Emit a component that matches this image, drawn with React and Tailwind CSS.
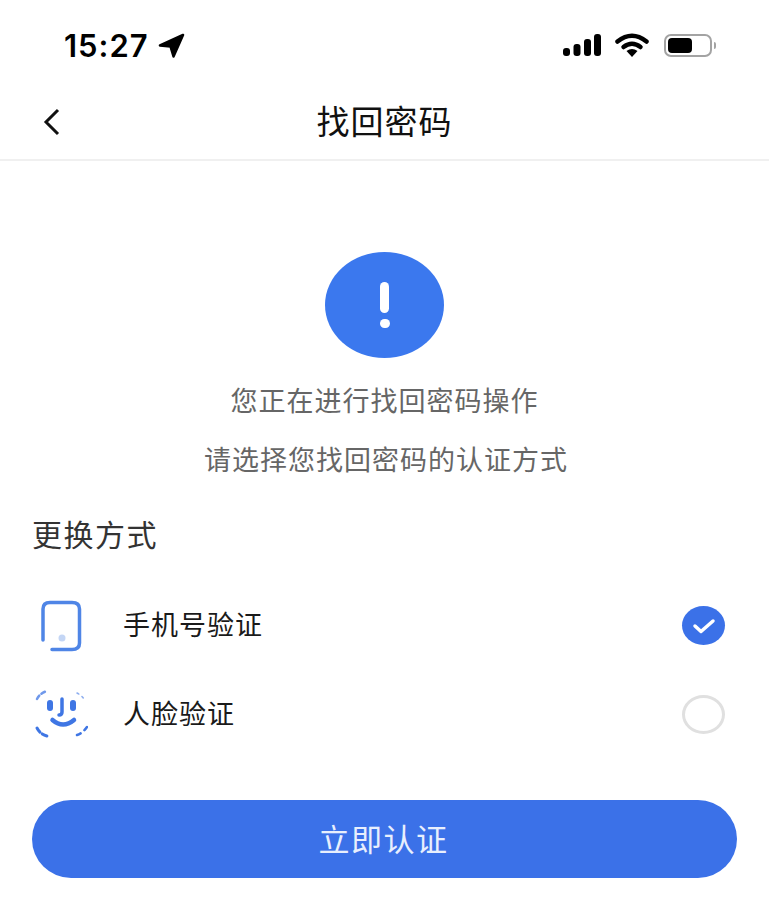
import React from 'react';

const cjk = { fontFamily: '"Noto Sans CJK SC", sans-serif' };

function StatusBar() {
  return (
    <div className="h-[86px] flex items-start justify-between pt-[28px] pl-[64px] pr-[53px]">
      <div className="flex items-center gap-[9px] h-[34px]">
        <span className="text-[31px] font-semibold leading-none text-black tracking-[1px] font-['Inter',sans-serif]">15:27</span>
        <svg width="27" height="25" viewBox="0 0 27 25">
          <path d="M25 2 L2 12.5 L12.5 13.5 L15.5 23.5 Z" fill="#000" stroke="#000" strokeWidth="2.5" strokeLinejoin="round" />
        </svg>
      </div>
      <div className="flex items-center h-[34px]">
        <svg width="38" height="22" viewBox="0 0 38 22">
          <rect x="0" y="14" width="7" height="8" rx="3" fill="#000" />
          <rect x="10.5" y="10" width="7" height="12" rx="3" fill="#000" />
          <rect x="21" y="5" width="7" height="17" rx="3" fill="#000" />
          <rect x="31" y="0" width="7" height="22" rx="3" fill="#000" />
        </svg>
        <svg width="34" height="24" viewBox="0 0 34 24" className="ml-[14px]">
          <path d="M2.5 8.5 Q17 -3 31.5 8.5" fill="none" stroke="#000" strokeWidth="4.5" strokeLinecap="round" />
          <path d="M8.5 14 Q17 7.5 25.5 14" fill="none" stroke="#000" strokeWidth="4.5" strokeLinecap="round" />
          <path d="M11.5 18 Q17 14 22.5 18 L17 24 Z" fill="#000" />
        </svg>
        <div className="ml-[15px] w-[48px] h-[23px] rounded-[7px] border-2 border-[#a3a3a3] p-[2px] flex">
          <div className="w-[24px] rounded-[4px] bg-black" />
        </div>
        <div className="ml-[2px] w-[2px] h-[7px] rounded-r-full bg-[#a3a3a3]" />
      </div>
    </div>
  );
}

function PhoneIcon() {
  return (
    <svg width="44" height="54" viewBox="0 0 44 54">
      <path d="M4 41 V10 Q4 3.5 11 3.5 H33 Q40.5 3.5 40.5 10 V44 Q40.5 50.5 33 50.5 H13" fill="none" stroke="#4f85e6" strokeWidth="3.5" strokeLinecap="round" />
      <circle cx="23" cy="39" r="3.5" fill="#c4d6f5" />
    </svg>
  );
}

function FaceIcon() {
  return (
    <svg width="54" height="50" viewBox="0 0 54 50">
      <g fill="none" stroke="#3f76e4" strokeLinecap="round">
        <path d="M3 9 Q6 3 13 1" strokeWidth="2.5" strokeDasharray="4 3" opacity="0.75" />
        <path d="M43 3 Q49 6 51 11" strokeWidth="1.5" strokeDasharray="2 4" opacity="0.6" />
        <path d="M3 38 Q6 44 13 46" strokeWidth="3" strokeDasharray="5 3" />
        <path d="M43 45 Q49 43 53 37" strokeWidth="2.5" strokeDasharray="4 5" />
        <path d="M18.5 30 Q29 39 40 30" strokeWidth="4.5" />
        <path d="M28 9 V22 Q28 25 25 25" strokeWidth="3.5" />
      </g>
      <rect x="13" y="10" width="6" height="11" rx="3" fill="#3f76e4" />
      <rect x="36" y="10" width="6" height="11" rx="3" fill="#3f76e4" />
    </svg>
  );
}

function Row({ icon, label, checked }) {
  return (
    <div className="h-[89px] flex items-center pl-[32px] pr-[44px]">
      <div className="w-[58px] flex justify-center">{icon}</div>
      <span className="ml-[33px] pb-[4px] text-[27px] leading-none text-[#1a1a1a] tracking-[1px]" style={cjk}>{label}</span>
      {checked ? (
        <div className="ml-auto w-[43px] h-[39px] rounded-[50%] bg-[#3b71e8] flex items-center justify-center">
          <svg width="24" height="18" viewBox="0 0 24 18">
            <path d="M3 9 L9 14.5 L21 4" fill="none" stroke="#fff" strokeWidth="3.5" strokeLinecap="round" strokeLinejoin="round" />
          </svg>
        </div>
      ) : (
        <div className="ml-auto w-[43px] h-[39px] rounded-[50%] border-[3px] border-[#e0e0e0]" />
      )}
    </div>
  );
}

export default function App() {
  return (
    <div className="w-[769px] h-[922px] bg-white flex flex-col" style={cjk}>
      <StatusBar />

      {/* Nav bar */}
      <div className="relative h-[75px] border-b-2 border-[#f0f0f0] flex items-center justify-center">
        <svg width="20" height="28" viewBox="0 0 20 28" className="absolute left-[42px] top-[22px]">
          <path d="M16 2 L4 14 L16 26" fill="none" stroke="#111" strokeWidth="3" />
        </svg>
        <span className="pb-[5px] text-[33px] leading-none text-[#111] tracking-[1px]" style={cjk}>找回密码</span>
      </div>

      {/* Notice */}
      <div className="flex flex-col items-center pt-[91px]">
        <div className="w-[119px] h-[106px] rounded-[50%] bg-[#3b78ee] flex flex-col items-center justify-center gap-[6px]">
          <div className="w-[9px] h-[31px] rounded-full bg-white" />
          <div className="w-[10px] h-[9px] rounded-full bg-white" />
        </div>
        <p className="mt-[27px] h-[30px] text-[27px] leading-[30px] text-[#666] tracking-[1px]">您正在进行找回密码操作</p>
        <p className="mt-[29px] pl-[3px] h-[30px] text-[27px] leading-[30px] text-[#666] tracking-[1px]">请选择您找回密码的认证方式</p>
      </div>

      <p className="mt-[42px] pl-[32px] h-[34px] text-[30px] leading-[34px] text-[#333] tracking-[1.5px]">更换方式</p>

      <div className="mt-[31px] flex flex-col">
        <Row icon={<PhoneIcon />} label="手机号验证" checked />
        <Row icon={<FaceIcon />} label="人脸验证" />
      </div>

      <div className="mt-[41px] mx-[32px] h-[78px] rounded-full bg-[#3b71e8] flex items-center justify-center">
        <span className="pb-[4px] pr-[2px] text-[31px] leading-none text-[#e8effd] tracking-[1.5px]">立即认证</span>
      </div>
    </div>
  );
}
